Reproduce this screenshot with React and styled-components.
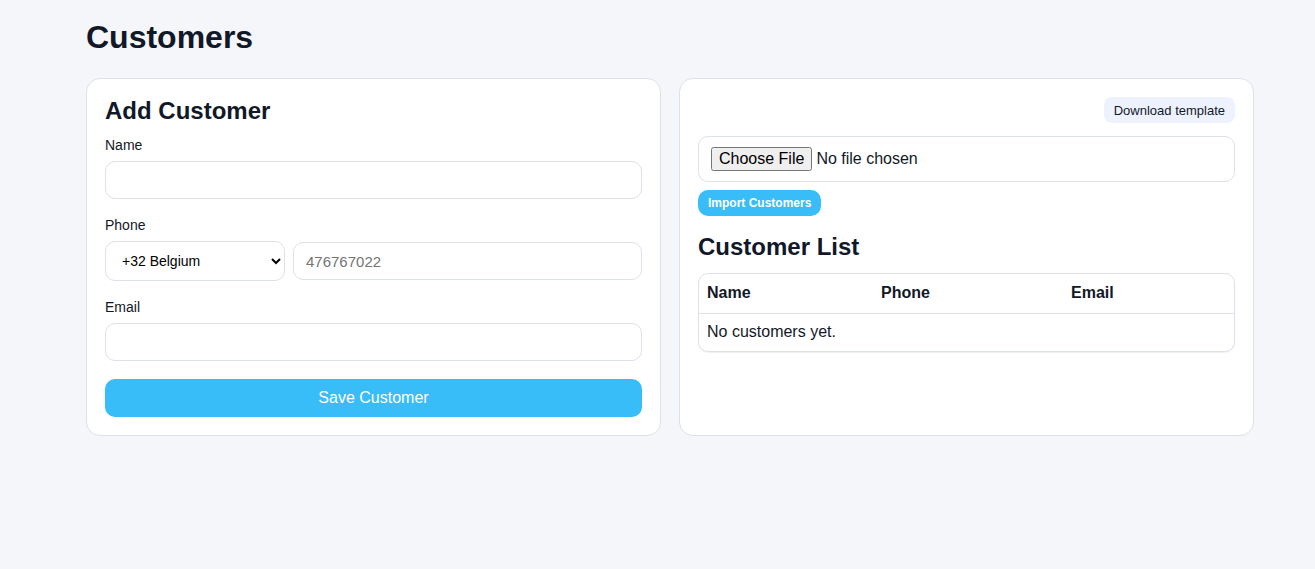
import React from 'react';
import styled, { createGlobalStyle } from 'styled-components';

const GlobalStyle = createGlobalStyle`
  html, body {
    margin: 0;
    padding: 0;
    background: #f5f6fa;
    font-family: "Liberation Sans", Arial, sans-serif;
    color: #111827;
  }
  * { box-sizing: border-box; }
`;

const Page = styled.main`
  width: 1168px;
  margin-left: 86px;
  padding-top: 18px;
`;

const Title = styled.h1`
  margin: 0 0 22px;
  font-size: 32px;
  line-height: 38px;
  font-weight: 700;
`;

const Grid = styled.div`
  display: grid;
  grid-template-columns: 1fr 1fr;
  gap: 18px;
`;

const Card = styled.section`
  background: #ffffff;
  border: 1px solid #dde1ee;
  border-radius: 14px;
  padding: 18px;
  display: flex;
  flex-direction: column;
`;

const CardTitle = styled.h2`
  margin: 0;
  font-size: 24px;
  line-height: 28px;
  font-weight: 700;
`;

const Field = styled.div`
  display: flex;
  flex-direction: column;
  gap: 8px;
  margin-top: ${({ first }) => (first ? '12px' : '18px')};
`;

const Label = styled.label`
  font-size: 14px;
  line-height: 16px;
  color: #111827;
`;

const Input = styled.input`
  height: 38px;
  width: 100%;
  min-width: 0;
  border: 1px solid #dde1ee;
  border-radius: 10px;
  padding: 0 12px;
  font-family: inherit;
  font-size: 15px;
  background: #fff;
  &::placeholder { color: #757575; }
`;

const PhoneRow = styled.div`
  display: flex;
  gap: 8px;
  align-items: center;
  & > input { flex: 1 1 auto; }
`;

const Select = styled.select`
  flex: 0 0 180px;
  width: 180px;
  height: 40px;
  border: 1px solid #dde1ee;
  border-radius: 10px;
  padding: 0 8px 0 12px;
  font-family: inherit;
  font-size: 14px;
  background: #fff;
  color: #000;
`;

const PrimaryButton = styled.button`
  border: none;
  background: #38bdf8;
  color: #fff;
  font-family: inherit;
  cursor: pointer;
  border-radius: 10px;
  height: ${({ small }) => (small ? '26px' : '38px')};
  font-size: ${({ small }) => (small ? '12px' : '16px')};
  font-weight: ${({ small }) => (small ? 700 : 400)};
  padding: ${({ small }) => (small ? '0 10px' : '0')};
  margin-top: ${({ small }) => (small ? '8px' : '18px')};
  width: ${({ small }) => (small ? 'fit-content' : '100%')};
`;

const TopBar = styled.div`
  display: flex;
  justify-content: flex-end;
`;

const GhostButton = styled.button`
  border: none;
  background: #eef2ff;
  color: #111827;
  font-family: inherit;
  font-size: 13px;
  height: 26px;
  padding: 0 10px;
  border-radius: 8px;
  cursor: pointer;
`;

const FileBox = styled.div`
  margin-top: 13px;
  height: 46px;
  border: 1px solid #dde1ee;
  border-radius: 10px;
  padding: 0 12px;
  display: flex;
  align-items: center;
  font-size: 16px;
  input { font-family: inherit; font-size: 16px; }
`;

const ListTitle = styled(CardTitle)`
  margin-top: 17px;
`;

const TableWrap = styled.div`
  margin-top: 12px;
  border: 1px solid #dde1ee;
  border-radius: 10px;
  overflow: hidden;
  box-shadow: 0 1px 1px rgba(17, 24, 39, 0.06);
`;

const Table = styled.table`
  width: 100%;
  border-collapse: collapse;
  font-size: 16px;
`;

const Th = styled.th`
  text-align: left;
  font-weight: 700;
  padding: 0 8px;
  height: 39px;
  border-bottom: 1px solid #dde1ee;
  width: ${({ w }) => w || 'auto'};
`;

const Td = styled.td`
  padding: 0 8px;
  height: 38px;
`;

export default function App() {
  return (
    <>
      <GlobalStyle />
      <Page>
        <Title>Customers</Title>
        <Grid>
          <Card>
            <CardTitle>Add Customer</CardTitle>
            <Field first>
              <Label>Name</Label>
              <Input type="text" />
            </Field>
            <Field>
              <Label>Phone</Label>
              <PhoneRow>
                <Select defaultValue="+32">
                  <option value="+32">+32 Belgium</option>
                </Select>
                <Input type="tel" placeholder="476767022" />
              </PhoneRow>
            </Field>
            <Field>
              <Label>Email</Label>
              <Input type="email" />
            </Field>
            <PrimaryButton>Save Customer</PrimaryButton>
          </Card>
          <Card>
            <TopBar>
              <GhostButton>Download template</GhostButton>
            </TopBar>
            <FileBox>
              <input type="file" />
            </FileBox>
            <PrimaryButton small>Import Customers</PrimaryButton>
            <ListTitle>Customer List</ListTitle>
            <TableWrap>
              <Table>
                <thead>
                  <tr>
                    <Th w="174px">Name</Th>
                    <Th w="190px">Phone</Th>
                    <Th>Email</Th>
                  </tr>
                </thead>
                <tbody>
                  <tr>
                    <Td colSpan={3}>No customers yet.</Td>
                  </tr>
                </tbody>
              </Table>
            </TableWrap>
          </Card>
        </Grid>
      </Page>
    </>
  );
}
